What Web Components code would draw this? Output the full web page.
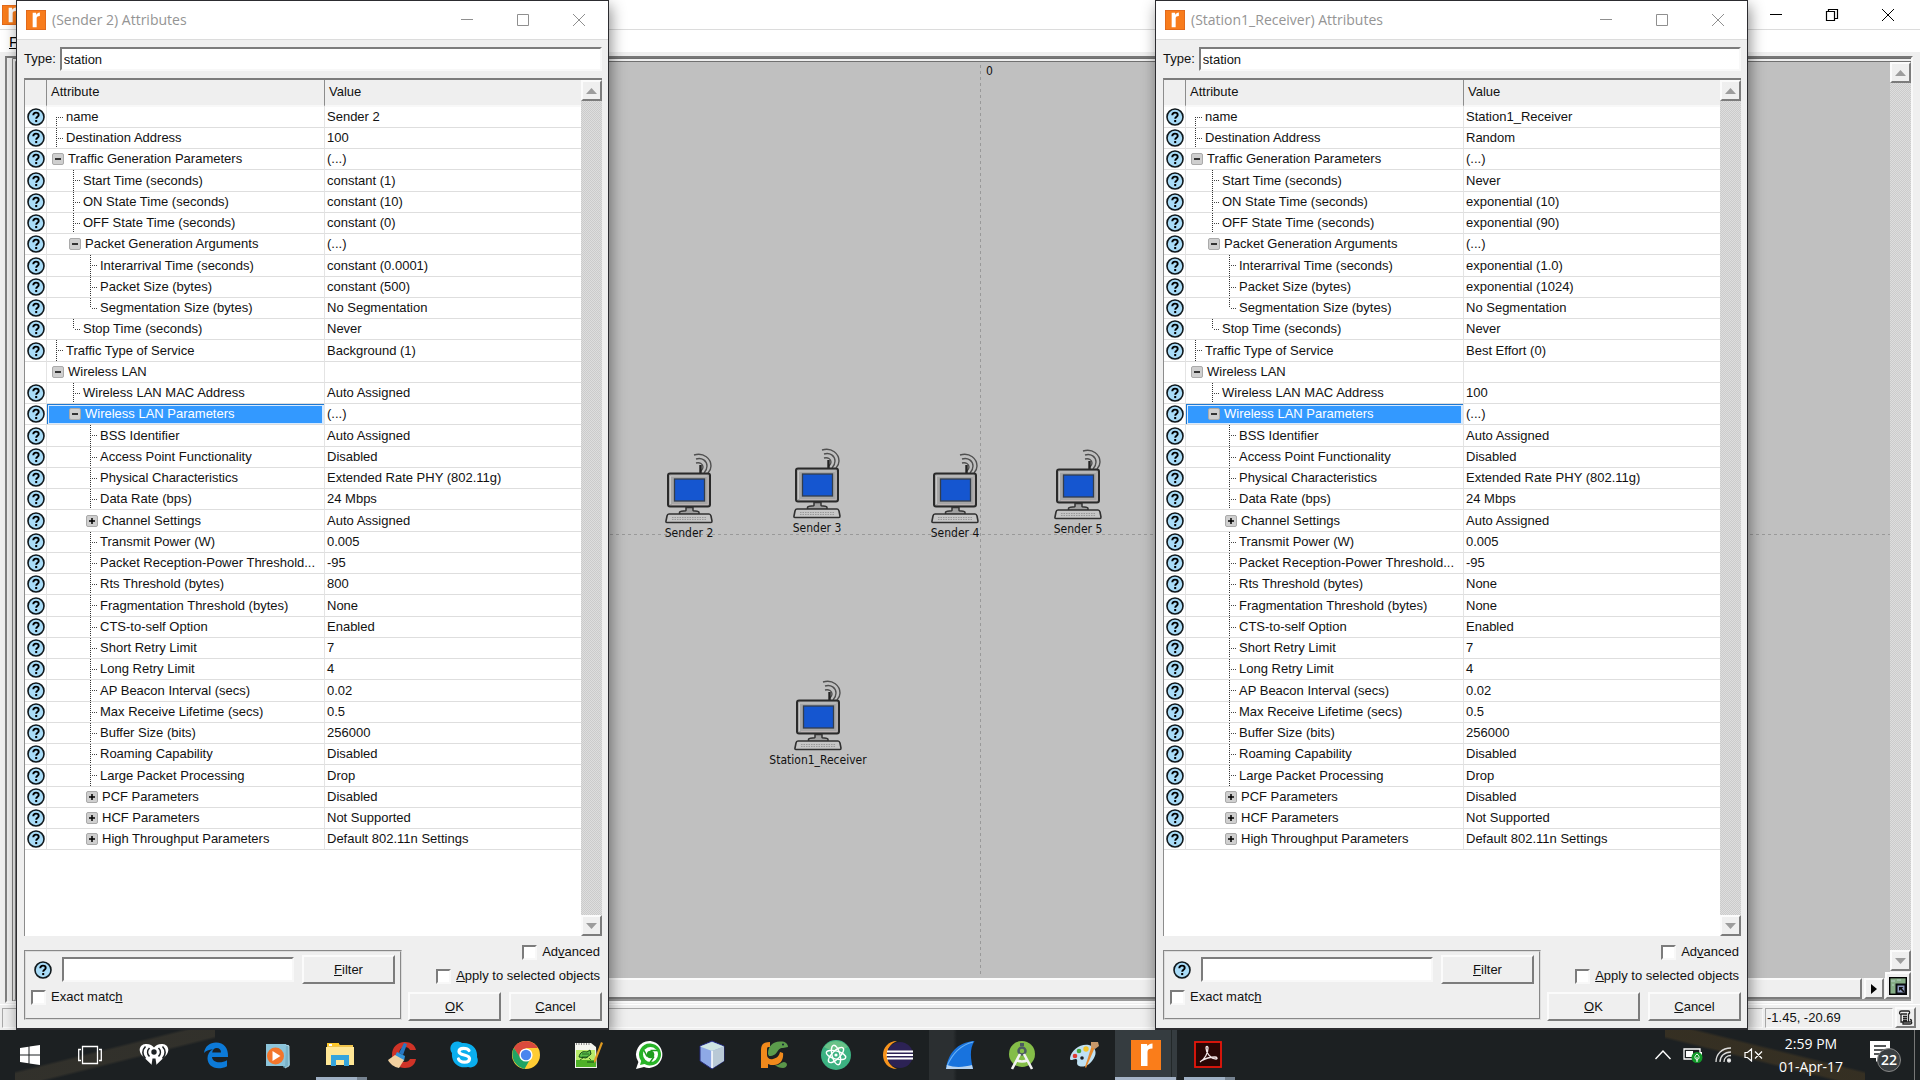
<!DOCTYPE html>
<html lang="en">
<head>
<meta charset="utf-8">
<title>Attributes</title>
<style>
html,body{height:100%}
body{margin:0;overflow:hidden;background:#1d2123;font:13px/16px "Liberation Sans",Arial,sans-serif;color:#111}
</style>
</head>
<body>
<desk-top>
  <project-window>
    <station-node style="left:673px;top:391px" name="Sender 2"></station-node>
    <station-node style="left:801px;top:386px" name="Sender 3"></station-node>
    <station-node style="left:939px;top:391px" name="Sender 4"></station-node>
    <station-node style="left:1062px;top:387px" name="Sender 5"></station-node>
    <station-node style="left:802px;top:618px" name="Station1_Receiver"></station-node>
  </project-window>
  <attribute-dialog style="left:16px" node="Sender 2"></attribute-dialog>
  <attribute-dialog style="left:1155px" node="Station1_Receiver"></attribute-dialog>
  <task-bar slot="bar"></task-bar>
</desk-top>
<script>
const define = (name, html, setup) => customElements.define(name, class extends HTMLElement {
  connectedCallback() {
    if (this.shadowRoot) return;
    const t = document.createElement('template');
    t.innerHTML = typeof html === 'function' ? html(this) : html;
    this.attachShadow({mode: 'open'}).append(t.content.cloneNode(true));
    if (setup) setup(this);
  }
});

const bevel = `
  .raised{box-sizing:border-box;margin:0;padding:0;background:#efefef;border:2px solid;border-color:#fbfbfb #7c7c7c #7c7c7c #fbfbfb;font:inherit;color:inherit;display:flex;align-items:center;justify-content:center}
  .sunken{box-sizing:border-box;background:#fff;border:2px solid;border-color:#7c7c7c #f8f8f8 #f8f8f8 #7c7c7c;font:inherit;color:inherit;outline:0;border-radius:0}`;

define('desk-top', `
<style>
:host{display:flex;flex-direction:column;height:100vh}
.work{position:relative;flex:1;min-height:0;overflow:hidden}
</style>
<div class="work"><slot></slot></div>
<slot name="bar"></slot>`);

define('app-logo', `
<style>:host{display:block;width:20px;height:20px}svg{display:block;width:100%;height:100%}</style>
<svg viewBox="0 0 30 30"><rect width="30" height="30" fill="#f87c1c"/><rect x=".5" y=".5" width="29" height="29" fill="none" stroke="#d9621a"/><path d="M10 4h5l.7 3.2C17 4.800 18.500 3.700 20.800 3.700V9c-3 0-4.800 1-4.800 3.500V26h-6z" fill="#fff"/></svg>`);

define('window-controls', h => `
<style>
:host{display:flex;align-self:stretch}
button{width:56px;border:0;padding:0;background:none;display:flex;align-items:center;justify-content:center;color:inherit}
svg{display:block;width:14px;height:14px;fill:none;stroke:currentColor}
</style>
<button aria-label="Minimize"><svg viewBox="0 0 14 14"><path d="M1 6.500h12"/></svg></button>
<button aria-label="Maximize"><svg viewBox="0 0 14 14">${h.hasAttribute('restored')
  ? '<path d="M1.500 3.500h8v9h-8zM3.500 3.500v-2h9v9h-3" stroke-width="1.200"/>' : '<path d="M1.500 1.500h11v11h-11z"/>'}</svg></button>
<button aria-label="Close"><svg viewBox="0 0 14 14"><path d="M1 1l12 12M13 1L1 13"/></svg></button>`);

define('scroll-track', `
<style>
:host{display:flex;flex-direction:column;width:21px;background:repeating-conic-gradient(#cbcbcb 0 25%,#dedede 0 50%) 0 0/2px 2px}
${bevel}
.raised{height:21px}
i{flex:1}
svg{width:11px;height:6px;fill:#9c9c9c}
</style>
<button class="raised" aria-label="Scroll up"><svg viewBox="0 0 11 6"><path d="M0 6L5.500 0 11 6z"/></svg></button><i></i>
<button class="raised" aria-label="Scroll down"><svg viewBox="0 0 11 6"><path d="M0 0l5.500 6L11 0z"/></svg></button>`);

define('help-icon', `
<style>:host{display:block;width:18px;height:18px}svg{display:block}</style>
<svg width="18" height="18" viewBox="0 0 18 18"><circle cx="9" cy="9" r="8" fill="#a9dcf8" stroke="#10181c" stroke-width="1.600"/><path d="M6.300 7.200C6.300 5.500 7.400 4.600 9 4.600s2.700.9 2.700 2.300C11.700 8.700 9.200 8.800 9.200 10.800" fill="none" stroke="#000" stroke-width="1.900"/><rect x="8.200" y="12" width="2" height="2.100"/></svg>`);

define('station-node', h => `
<style>
:host{position:absolute;display:flex;flex-direction:column;align-items:center;gap:1px;width:0;font:12px/16px "DejaVu Sans Condensed","DejaVu Sans",sans-serif}
svg{display:block;flex:none}
span{white-space:nowrap}
</style>
<svg width="48" height="71" viewBox="0 0 48 71" fill="none">
<path d="M29 2c10-3 17 4 17 11 0 3-1 5-3 7M31 6c6-2 11 2 11 7 0 3-1 5-3 7M31 10c4-1 7 1 7 4 0 2-1 3-2 4" stroke="#505050" stroke-width="1.400"/>
<path d="M35.500 12v8" stroke="#222" stroke-width="2.400"/>
<rect x="3" y="20.500" width="42" height="33" rx="2" fill="#a6a6a6" stroke="#2a2a2a" stroke-width="2"/>
<path d="M5.500 51V23h37" stroke="#c8c8c8"/><path d="M7 51.500h36V24" stroke="#bcb4b4"/>
<rect x="9.500" y="26" width="30" height="22" fill="#1556d0" stroke="#333d4c" stroke-width="1.300"/>
<path d="M21 54.500h7v3c0 1 6 0 6 2v2H14.500v-2c0-2 6.500-1 6.500-2z" fill="#a0a0a0" stroke="#333" stroke-width="1.500"/>
<path d="M4 61h40c1 0 1.500.5 2 2l1 5c0 1-.5 1.500-1 1.500H2c-1 0-1.200-.5-1-1.500l1-5c.3-1.500 1-2 2-2z" fill="#c6c6c6" stroke="#303030" stroke-width="1.600"/>
<path d="M7 64.500h34M7 66.500h34" stroke="#999" stroke-dasharray="1.500 1"/>
</svg>
<span>${h.getAttribute('name')}</span>`);

define('project-window', `
<style>
:host{display:flex;flex-direction:column;height:100%;background:#efefef}
${bevel}
header{display:flex;align-items:center;justify-content:space-between;height:29px;padding:0 4px 0 2px;background:#fff;border-bottom:1px solid #dcdcdc;color:#000}
nav{display:flex;height:22px;margin-bottom:4px;background:#fff;padding-left:9px}
nav button{border:0;background:none;padding:0;font:15px/24px "Liberation Sans",Arial,sans-serif}
.frame{flex:1;min-height:0;display:flex;margin:0 7px 1px 5px;border-top:2px solid #777;border-left:2px solid #808080;border-right:2px solid #f8f8f8;border-bottom:2px solid #fafafa}
.inner{flex:1;display:flex;min-width:0;margin-left:5px;border-left:4px double #808080;border-top:4px double #707070;border-bottom:2px solid #999}
.left{flex:1;min-width:0;display:flex;flex-direction:column}
.canvas{position:relative;flex:1;overflow:hidden;background:#c0c0c0}
.v,.h{position:absolute}
.v{left:964px;top:3px;bottom:3px;width:1px;background:repeating-linear-gradient(#999 0 3px,transparent 3px 6px)}
.h{top:472px;left:0;right:0;height:1px;background:repeating-linear-gradient(90deg,#999 0 3px,transparent 3px 6px)}
.zero{position:absolute;left:970px;top:2px;font:12px/14px "DejaVu Sans Condensed",sans-serif}
.hs{display:flex;gap:2px;height:21px;margin-right:6px}
.hs .thumb{flex:1}.hs button{width:20px}
.right{display:flex;flex-direction:column;width:21px}
.right scroll-track{flex:1;margin-bottom:1px}
.corner{width:26px;height:27px;margin-left:-5px;z-index:1}
footer{display:flex;align-items:center;gap:2px;height:26px;padding:0 4px 0 2px;box-sizing:border-box;border-top:1px solid #fff}
footer div{box-sizing:border-box;height:20px;border:1px solid;border-color:#a8a8a8 #fafafa #fafafa #a8a8a8;line-height:18px}
.msg{flex:1}.pos{width:128px;padding-left:1px}
footer button{width:21px;height:21px;margin-left:4px}
</style>
<header><app-logo></app-logo><window-controls restored></window-controls></header>
<nav><button><u>F</u></button></nav>
<div class="frame"><div class="inner">
  <div class="left">
    <div class="canvas"><div class="v"></div><div class="h"></div><span class="zero">0</span><slot></slot></div>
    <div class="hs"><div class="thumb raised"></div><button class="raised" aria-label="Scroll right"><svg width="6" height="10" viewBox="0 0 6 10"><path d="M0 0l6 5-6 5z"/></svg></button></div>
  </div>
  <div class="right"><scroll-track></scroll-track>
    <button class="raised corner" aria-label="Overview"><svg width="18" height="18" viewBox="0 0 18 18"><rect x=".7" y=".7" width="16.600" height="16.600" fill="#86ae86" stroke="#000" stroke-width="1.400"/><path d="M2 4h4M8 3h4M3 8h2" stroke="#b5d2c4"/><path d="M6.500 6.500h11v11h-11z" fill="#0a0c10"/><path d="M8.500 8.500h7v7h-7z" fill="#8f9cc0"/><path d="M10 10h4.500L13 11.500l2.500 3-1 1-3-3L10 14z" fill="#111"/></svg></button>
  </div>
</div></div>
<footer><div class="msg"></div><div class="pos">-1.45, -20.69</div>
<button class="raised" aria-label="Log"><svg width="15" height="15" viewBox="0 0 15 15" fill="none" stroke="#222" stroke-width="1.300"><path d="M3.500 1h7c1.500 0 1.500 3 0 3v7.500M3.500 1C1 1 1 4.500 3 4.500V12h9c2 0 2-2.500 0-2.500M3 4h6M5 6.500h4M5 8.500h4M5 10.500h4M5 12v2h7c1.500 0 2-1 1.500-2"/></svg></button></footer>`);

// [label, depth, kind, value]; kind: f first, m middle, l last, - open group, + closed group
const ROWS = v => [
  ['name',1,'f',v.name],['Destination Address',1,'m',v.dest],['Traffic Generation Parameters',1,'-','(...)'],
  ['Start Time (seconds)',2,'m',v.start],['ON State Time (seconds)',2,'m',v.on],['OFF State Time (seconds)',2,'m',v.off],
  ['Packet Generation Arguments',2,'-','(...)'],['Interarrival Time (seconds)',3,'m',v.inter],['Packet Size (bytes)',3,'m',v.size],
  ['Segmentation Size (bytes)',3,'l','No Segmentation'],['Stop Time (seconds)',2,'l','Never'],['Traffic Type of Service',1,'m',v.tos],
  ['Wireless LAN',1,'-',''],['Wireless LAN MAC Address',2,'m',v.mac],['Wireless LAN Parameters',2,'-','(...)'],
  ['BSS Identifier',3,'m','Auto Assigned'],['Access Point Functionality',3,'m','Disabled'],
  ['Physical Characteristics',3,'m','Extended Rate PHY (802.11g)'],['Data Rate (bps)',3,'m','24 Mbps'],
  ['Channel Settings',3,'+','Auto Assigned'],['Transmit Power (W)',3,'m','0.005'],['Packet Reception-Power Threshold...',3,'m','-95'],
  ['Rts Threshold (bytes)',3,'m',v.rts],['Fragmentation Threshold (bytes)',3,'m','None'],['CTS-to-self Option',3,'m','Enabled'],
  ['Short Retry Limit',3,'m','7'],['Long Retry Limit',3,'m','4'],['AP Beacon Interval (secs)',3,'m','0.02'],
  ['Max Receive Lifetime (secs)',3,'m','0.5'],['Buffer Size (bits)',3,'m','256000'],['Roaming Capability',3,'m','Disabled'],
  ['Large Packet Processing',3,'m','Drop'],['PCF Parameters',3,'+','Disabled'],['HCF Parameters',3,'+','Not Supported'],
  ['High Throughput Parameters',3,'+','Default 802.11n Settings']];
const NODES = {
  'Sender 2': {name:'Sender 2',dest:'100',start:'constant (1)',on:'constant (10)',off:'constant (0)',inter:'constant (0.0001)',size:'constant (500)',tos:'Background (1)',mac:'Auto Assigned',rts:'800'},
  'Station1_Receiver': {name:'Station1_Receiver',dest:'Random',start:'Never',on:'exponential (10)',off:'exponential (90)',inter:'exponential (1.0)',size:'exponential (1024)',tos:'Best Effort (0)',mac:'100',rts:'None'}
};
const row = ([label, depth, kind, value]) => {
  const box = kind === '-' || kind === '+';
  const mark = box
    ? `<button class="box" aria-label="Toggle ${label}"><svg width="10" height="10" viewBox="0 0 10 10"><path d="M2 5h6${kind === '+' ? 'M5 2v6' : ''}" stroke="#000" stroke-width="1.500"/></svg></button>`
    : `<i class="line ${kind}"></i>`;
  return `<tr class="${label === 'Wireless LAN Parameters' ? 'sel' : ''}"><td>${label === 'Wireless LAN' ? '' : '<help-icon></help-icon>'}</td>
    <td><div class="cell d${depth}">${mark}<span>${label}</span></div></td><td>${value}</td></tr>`;
};

define('attribute-dialog', h => `
<style>
:host{position:absolute;top:0;bottom:0;width:593px;box-sizing:border-box;display:flex;flex-direction:column;background:#efefef;border:1px solid #2c2c30;border-bottom-width:2px;box-shadow:2px 6px 14px rgba(0,0,0,.45)}
${bevel}
header{display:flex;align-items:center;height:38px;padding:0 1px 0 9px;background:#fff;border-bottom:1px solid #dcdcdc;color:#8f8f8f}
h1{flex:1;margin:0 0 0 6px;font:14px/20px "Open Sans","Noto Sans",sans-serif;color:#949494}
main{flex:1;min-height:0;display:flex;flex-direction:column;padding:7px 6px 7px 7px}
.type{display:flex;align-items:center;gap:4px;height:24px}
.type input{flex:1;min-width:0;height:24px;padding:0 0 0 2px}
.list{flex:1;min-height:0;display:flex;margin-top:7px;border:2px solid;border-width:2px 0 0 1px;border-color:#7c7c7c #fff #fff #8c8c8c;background:#fff}
.grid{flex:1;min-width:0;overflow:hidden}
table{width:100%;table-layout:fixed;border-collapse:separate;border-spacing:0}
th{box-sizing:border-box;height:27px;padding:0 0 2px 4px;text-align:left;font-weight:400;background:#efefef;border-bottom:2px solid #f8f8f8;border-left:1px solid #8c8c8c}
th:first-child{border-left:0}
td{box-sizing:border-box;height:21px;padding:0 0 0 2px;line-height:16px;white-space:nowrap;border-left:1px solid #e4e4e4;border-bottom:1px solid #dedede;overflow:hidden}
td:first-child{border-left:0;padding-left:2px}
tbody tr:nth-child(4n) td{height:22px}
td:nth-child(2){padding:0}
.cell{display:flex;align-items:center;height:20px;padding-left:3px}
tr:nth-child(4n) .cell{height:21px}
.d2{padding-left:20px}.d3{padding-left:37px}
.line{align-self:stretch;width:10px;margin-left:6px;background:repeating-linear-gradient(90deg,#444 0 1px,transparent 1px 2px) 2px 10px/5px 1px no-repeat,repeating-linear-gradient(#333 0 1px,transparent 1px 2px) 0 0/1px 100% no-repeat}
.line.f{background-position:2px 10px,0 10px}
.line.l{background-size:5px 1px,1px 10px}
.box{width:12px;height:12px;margin:0 4px 0 2px;padding:0;border:1px solid #aaa;border-radius:2px;background:#cfcfcf;display:flex}
.box svg{display:block}
.sel td:nth-child(2){background:#39f;color:#fff;box-shadow:inset 1px 1px #1e78d2,inset 2px 2px #d6eaff,inset -2px -1px #d6eaff}
.bottom{display:flex;justify-content:space-between;padding-top:8px}
fieldset{box-sizing:border-box;width:378px;height:70px;margin:6px 0 0;padding:3px 5px 0 7px;border:2px groove #dcdcdc;display:flex;flex-direction:column;gap:5px}
.f{display:flex;align-items:center}
.f help-icon{margin:0 10px 0 1px}
.f input{flex:1;min-width:0;height:25px;margin-right:8px}
.raised{width:93px;height:29px}
label{display:flex;align-items:center;gap:5px;white-space:nowrap}
input[type=checkbox]{appearance:none;box-sizing:border-box;width:15px;height:15px;margin:0;background:#fff;border:2px solid;border-color:#7c7c7c #f8f8f8 #f8f8f8 #7c7c7c}
fieldset>label{margin-left:-2px}
.opts{display:flex;flex-direction:column;align-items:flex-end;gap:8px}
.opts label{padding-right:2px}
.btns{display:flex;gap:8px}
</style>
<header><app-logo></app-logo><h1>(${h.getAttribute('node')}) Attributes</h1><window-controls></window-controls></header>
<main>
  <div class="type"><label for="t">Type:</label><input id="t" class="sunken" value="station"></div>
  <div class="list"><div class="grid"><table><colgroup><col style="width:21px"><col style="width:278px"><col></colgroup>
    <thead><tr><th></th><th>Attribute</th><th>Value</th></tr></thead>
    <tbody>${ROWS(NODES[h.getAttribute('node')]).map(row).join('')}</tbody></table></div><scroll-track></scroll-track></div>
  <div class="bottom">
    <fieldset><div class="f"><help-icon></help-icon><input class="sunken" aria-label="Filter text"><button class="raised"><span><u>F</u>ilter</span></button></div>
      <label><input type="checkbox"><span>Exact matc<u>h</u></span></label></fieldset>
    <div class="opts"><label><input type="checkbox"><span>Ad<u>v</u>anced</span></label>
      <label><input type="checkbox"><span><u>A</u>pply to selected objects</span></label>
      <div class="btns"><button class="raised"><span><u>O</u>K</span></button><button class="raised"><span><u>C</u>ancel</span></button></div></div>
  </div>
</main>`);

const ICONS = [
['iHeartRadio','<path d="M15 27L3 15.500C-1.500 10 1 4.500 6.500 4c4-.3 7 1.500 8.500 3.500C16.500 5.500 19.500 3.700 23.500 4 29 4.500 31.500 10 27 15.500z" fill="#fff"/><g fill="none" stroke="#1d2123" stroke-width="1.600"><path d="M10.500 8c-2.500 2.500-2.500 6 0 8.500M19.500 8c2.500 2.500 2.500 6 0 8.500M6.500 6.500c-3.500 3.500-3.500 8.500 0 12M23.500 6.500c3.500 3.500 3.500 8.500 0 12"/></g><circle cx="15" cy="12" r="2.700" fill="#1d2123"/><path d="M13.500 18.500h3L18 28h-6z" fill="#1d2123"/>'],
['Edge','<path d="M3 13C4 6 9 2.500 15 2.500c8 0 12.500 5.500 12 14.500H11c.3 3.500 3.500 5.300 7.500 5.300 2.600 0 5-.6 7.500-2v6c-2.500 1.400-5.500 2-8.500 2C11 28.300 6.500 24 6.500 18.300c0-4 2-7.300 5.500-9C7.500 9.500 5 11 3 13zm8.200-.5H20c0-2.800-1.600-4.500-4.300-4.500-2.500 0-4.100 1.700-4.500 4.500z" fill="#0c7ad8"/>'],
['Media Player','<path d="M8 4l18 1 1 20-6 3z" fill="#5e9fb8"/><rect x="3" y="4" width="20" height="22" fill="#8cc4da"/><path d="M23 5l3 1v20l-4 2" fill="#79b2c8" stroke="#cfe8f2" stroke-width=".7"/><circle cx="12.500" cy="16" r="8.500" fill="#f3752b"/><path d="M9.500 11l8 5-8 5z" fill="#fff"/>'],
['File Explorer','<path d="M2 3h11l2 2h13v20H2z" fill="#f0c44c"/><path d="M1 7h28v18H1z" fill="#ffe796"/><path d="M2 3h12v3H2z" fill="#fdc82a"/><path d="M4 4h3v2H4z" fill="#fff"/><path d="M6 26V15h18v11h-5v-6h-8v6z" fill="#36a5dd"/>'],
['CCleaner','<path d="M29 10h-6c-1-2-3-3-5-3-4 0-6 3-6 7.500S14 22 18 22c2.500 0 4-1 5-3h6c-1 6-5 9-11 9C10 28 5 22.500 5 15S10 2 18 2c6 0 10 3 11 8z" fill="#cf3327"/><path d="M17 3l3 1-4 11-4-2z" fill="#2778c4"/><path d="M10 12l8 4-1 5-9-5z" fill="#3294da"/><path d="M8 15l9 5-5 8C7 27 3 24 1 20z" fill="#f2d1a0"/>'],
['Skype','<path d="M8 1.500c2 0 3.500.5 5 1.500C22 2 29 8 28 17c3 6-3 12-9 10C9 29 2 22 3 13-1 8 3 1.500 8 1.500z" fill="#0aaeee"/><path d="M20 10.500C18.500 8 10 7 10 11.500c0 4.500 10.500 2.500 10.500 7 0 5-9.500 4.500-11 .5" fill="none" stroke="#fff" stroke-width="3.200" stroke-linecap="round"/>'],
['Chrome','<circle cx="15" cy="15" r="14" fill="#fc3"/><path d="M15 1C9.500 1 5 4 2.900 8L9 18.500 15 8h12C24.500 3.800 20 1 15 1z" fill="#d94a3d"/><path d="M2.900 8C-.5 15 1.500 25 13.500 29l6-10.500-10-.5z" fill="#21a464"/><circle cx="15" cy="15" r="6.600" fill="#fff"/><circle cx="15" cy="15" r="5.200" fill="#4a86ee"/>'],
['Notepad++','<path d="M2 3h16l5 4 1 21H2z" fill="#f3f5ee"/><path d="M3 10h19l1 17H3z" fill="#b9ec6a"/><path d="M3 20h20v7H3z" fill="#4fb128"/><path d="M6 17c1-5 4-6 8-5l3-2 1 4-5 4zM14 22h7" fill="#5cc04a" stroke="#174b17" stroke-width="1"/><path d="M9 14h7M9 17h6M7 20l3-2M16 18l2 2" stroke="#174b17" stroke-width=".8"/><path d="M3 4h15" stroke="#888" stroke-dasharray="1 1.500" stroke-width="2"/><path d="M28 2l2 1-7 18-2 2v-3z" fill="#e09a20"/>'],
['WhatsApp','<path d="M15.500 1A13.500 13.500 0 1 1 9 27L1 29l2.400-7A13.500 13.500 0 0 1 15.500 1z" fill="#fff"/><path d="M15.500 3.500A11 11 0 1 1 9.500 24L5 25l1.200-4A11 11 0 0 1 15.500 3.500z" fill="#28b428"/><circle cx="15.500" cy="14.500" r="7.500" fill="#fff"/><circle cx="15.500" cy="14.500" r="3.800" fill="#1d9c1d"/><path d="M15.500 10.500h7M12 16.500l-3-6M19 16.500l-4 6" stroke="#1d9c1d" stroke-width="1.500"/>'],
['VirtualBox','<path d="M15 1l12 5v15L15 29 3 21V6z" fill="#8ea9e6" stroke="#252a7a"/><path d="M15 2l12 4.500L15 11 3 6.500z" fill="#cfe6e4"/><path d="M15 11l12-4.500V21l-12 7.500z" fill="#b9c9d6"/><path d="M15 11v17" stroke="#fff" stroke-width="1.500"/>'],
['PyCharm','<path d="M2 28V10C2 4 5 2 11 2v5c-2 0-3 0-3 2v6c0 3 3 5 6 4 4-1 6-3 7-7l3 1c1 7-3 12-9 12-3 0-4 0-6-1v4z" fill="#f18a1c"/><path d="M9 14C9 6 14 1 22 1.500c4 0 7 2 7 5.500l-5 1c-7 0-4 8-14 8z" fill="#5c9c4c"/><path d="M16 25c4 1 6-3 9-3 5 1 3 6-1 6-3 0-6-1-8-3z" fill="#5a964a"/><circle cx="24" cy="4.500" r="1" fill="#123"/>'],
['Atom','<circle cx="15" cy="15" r="15" fill="#3cb282"/><path d="M3 7a15 15 0 0 1 24 0c-8 4-16 5-24 0z" fill="#7cc98a" opacity=".7"/><g fill="none" stroke="#fff" stroke-width="1.400"><ellipse cx="15" cy="15" rx="10" ry="4" transform="rotate(15 15 15)"/><ellipse cx="15" cy="15" rx="10" ry="4" transform="rotate(75 15 15)"/><ellipse cx="15" cy="15" rx="10" ry="4" transform="rotate(135 15 15)"/></g><circle cx="15" cy="15" r="1.600" fill="#fff"/>'],
['Eclipse','<path d="M14 1C5 1 0 8 0 15s5 14 14 14C7 26 4 21 4 15S7 4 14 1z" fill="#f7941e"/><circle cx="17" cy="15" r="13" fill="#2c2255"/><path d="M4 11.500h26M3.500 15h27M4 18.500h26" stroke="#fff" stroke-width="2"/>'],
['Wireshark','<path d="M1 29C3 14 12 2 29.500 1 24 9 26 20 28 29z" fill="#1873de"/><path d="M2 26C8 12 16 5 28 2" fill="none" stroke="#6ab2f5" stroke-width="1.200"/><path d="M1 29l1-4c8 3 18 2 25 0l1 4z" fill="#b8d3ef"/>'],
['Android Studio','<circle cx="15" cy="14" r="13" fill="#84bd48"/><circle cx="15" cy="11" r="3.500" fill="none" stroke="#4c5a62" stroke-width="2.500"/><path d="M13 6h4V3h-4z" fill="#4c5a62"/><path d="M13 14L5 29M17 14l8 15M9 20c4 2 8 2 12 0" stroke="#f2f2f2" stroke-width="2.600" fill="none"/>'],
['Paint','<path d="M1 18C2 10 12 3 20 5c7 2 8 8 5 13-4 7-10 10-15 8-4-2 0-6-3-7-3 0-6 3-6-1z" fill="#bfe1f3"/><circle cx="6" cy="16" r="2.300" fill="#de3d35"/><circle cx="10" cy="11" r="2.300" fill="#47a83e"/><circle cx="17" cy="9" r="2.700" fill="#f4c52c"/><circle cx="13" cy="18" r="1.800" fill="#1d2123"/><path d="M26 7l-9 21-1-1 7-22z" fill="#e78a2e"/><path d="M22 2l7 0 1 4-4 3-4-2z" fill="#c8986a"/>'],
['Riverbed','<rect width="30" height="30" fill="#fa7d1a"/><path d="M10 4h6l.5 2c1-1.500 2.500-2.500 5-2.500v5c-3.500 0-5 1-5 3.500v14H10z" fill="#fff"/>'],
['Acrobat','<rect x="2" y="2" width="26" height="25" fill="#2a0604" stroke="#e8170c" stroke-width="1.800"/><path d="M7 22c5-3 8-9 8-14 0-2-2-2-2 0 0 5 5 11 10 11 2 0 1-2-1-2-5 0-9 1-14 4" fill="none" stroke="#f3e6e6" stroke-width="1.300"/>']
];

define('task-bar', `
<style>
:host{flex:none;display:flex;justify-content:space-between;height:50px;color:#fff;background:linear-gradient(to bottom right,transparent 41%,rgba(90,80,60,.35) 44% 56%,transparent 59%) 15px 0/200px 50px no-repeat,linear-gradient(to bottom left,transparent 41%,rgba(100,76,36,.35) 44% 56%,transparent 59%) right 55px top 0/200px 50px no-repeat,#1c2022}
.apps,.tray{display:flex}
button{box-sizing:border-box;border:0;padding:0;margin:0;background:none;color:inherit;display:flex;align-items:center;justify-content:center;width:62px}
.s{width:60px}
.s+.s{margin-right:3px}
svg{display:block}
.run{background:linear-gradient(90deg,#9fb0c4 0 41px,#758290 41px) 7px 100%/51px 3px no-repeat}
.on{background:linear-gradient(#a5b4c8,#a5b4c8) 0 100%/61px 3px no-repeat,linear-gradient(90deg,transparent 56px,#222829 56px 57px,transparent 57px),#353c40}
.soft{background:linear-gradient(90deg,#2b2f31 0 24px,transparent 28px)}
.tray{align-items:center}
.tray button{width:30px}
.tray .clock{width:86px;height:50px;flex-direction:column;font:14px/23px "Open Sans","Noto Sans",sans-serif}
.tray .note{width:61px;justify-content:flex-start;padding-left:15px;height:50px;border-right:1px solid #777;margin-right:5px}
</style>
<div class="apps">
<button class="s" aria-label="Start"><svg width="20" height="20" viewBox="0 0 20 20" fill="#fff"><path d="M0 3l8.500-1.200v7.700H0zM9.500 1.600L20 0v9.500H9.500zM0 10.500h8.500v7.700L0 17zM9.500 10.500H20V20L9.500 18.400z"/></svg></button>
<button class="s" aria-label="Task view"><svg width="24" height="20" viewBox="0 0 24 20" fill="none" stroke="#fff" stroke-width="1.300"><path d="M4.500 1.500h15v17h-15zM3 4.500H.7v11H3M21 4.500h2.300v11H21"/></svg></button>
${ICONS.map(([n, p]) => `<button aria-label="${n}" class="${{'File Explorer':'run','Acrobat':'run','Riverbed':'on','Wireshark':'soft'}[n] || ''}"><svg width="30" height="30" viewBox="0 0 30 30">${p}</svg></button>`).join('')}
</div>
<div class="tray">
<button aria-label="Show hidden icons"><svg width="16" height="10" viewBox="0 0 16 10" fill="none" stroke="#fff" stroke-width="1.400"><path d="M.5 9L8 1l7.500 8"/></svg></button>
<button aria-label="Battery"><svg width="20" height="16" viewBox="0 0 20 16"><path d="M1 2h16v10H1z" fill="none" stroke="#fff" stroke-width="1.300"/><path d="M3 4h7v6H3zM17 5h2v4h-2z" fill="#fff"/><circle cx="14" cy="10.500" r="5.500" fill="#129a2a"/><path d="M14 7c3 2 2.500 5 0 6-2.500-1-3-4 0-6zm0 3v5" fill="none" stroke="#fff"/></svg></button>
<button aria-label="Network"><svg width="17" height="16" viewBox="0 0 17 16" fill="none" stroke="#ddd" stroke-width="1.300"><path d="M1 15C1 7 7 1 16 1M5 15C5 9 9.500 5 16 5M9 15c0-4 3-6.500 7-6.500"/><circle cx="14" cy="13.500" r="1.500" fill="#fff"/></svg></button>
<button aria-label="Volume"><svg width="19" height="14" viewBox="0 0 19 14" fill="none" stroke="#fff" stroke-width="1.200"><path d="M1 4.500h2.500L7.500 1v12L3.500 9.500H1zM11 3.500l7 7M18 3.500l-7 7"/></svg></button>
<button class="clock"><span>2:59 PM</span><span>01-Apr-17</span></button>
<button class="note" aria-label="Notifications"><svg width="34" height="34" viewBox="0 0 34 34"><path d="M1 3h20v17H11l-4 4v-4H1z" fill="#fff"/><path d="M5 8h12M5 12h12M5 16h9" stroke="#1d2123" stroke-width="1.300"/><circle cx="20" cy="22" r="11.500" fill="#3a3f42" stroke="#888" stroke-width="1"/><text x="20" y="27" text-anchor="middle" fill="#fff" font-family="Open Sans" font-weight="600" font-size="14">22</text></svg></button>
</div>`);
</script>
</body>
</html>
